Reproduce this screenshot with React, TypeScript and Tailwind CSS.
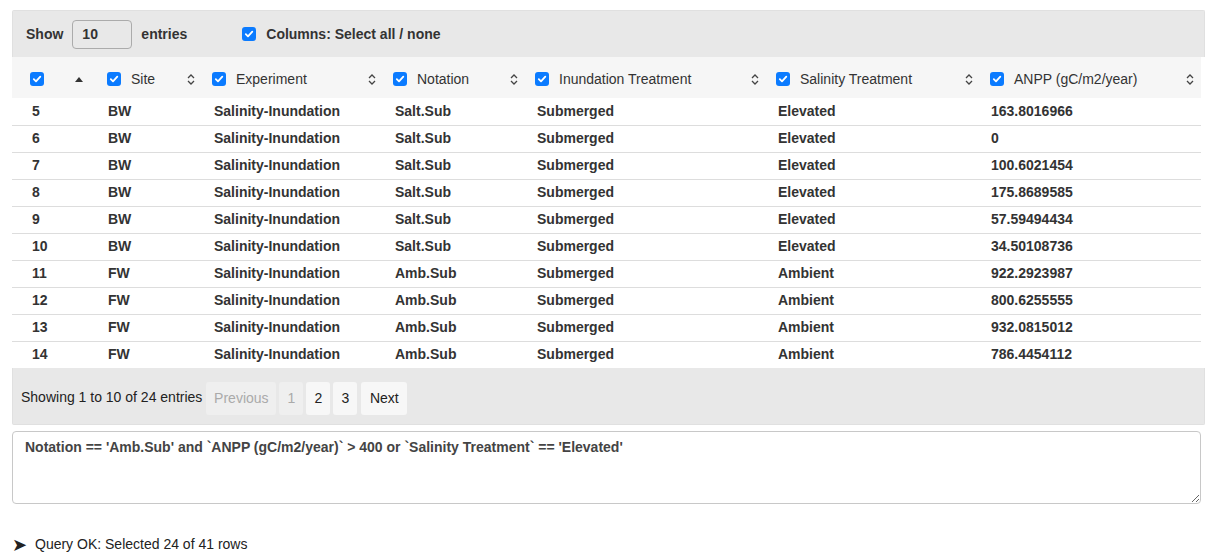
import type { ReactNode } from "react";

type Row = {
  id: number;
  site: string;
  experiment: string;
  notation: string;
  inundation: string;
  salinity: string;
  anpp: string;
};

const rows: Row[] = [
  { id: 5, site: "BW", experiment: "Salinity-Inundation", notation: "Salt.Sub", inundation: "Submerged", salinity: "Elevated", anpp: "163.8016966" },
  { id: 6, site: "BW", experiment: "Salinity-Inundation", notation: "Salt.Sub", inundation: "Submerged", salinity: "Elevated", anpp: "0" },
  { id: 7, site: "BW", experiment: "Salinity-Inundation", notation: "Salt.Sub", inundation: "Submerged", salinity: "Elevated", anpp: "100.6021454" },
  { id: 8, site: "BW", experiment: "Salinity-Inundation", notation: "Salt.Sub", inundation: "Submerged", salinity: "Elevated", anpp: "175.8689585" },
  { id: 9, site: "BW", experiment: "Salinity-Inundation", notation: "Salt.Sub", inundation: "Submerged", salinity: "Elevated", anpp: "57.59494434" },
  { id: 10, site: "BW", experiment: "Salinity-Inundation", notation: "Salt.Sub", inundation: "Submerged", salinity: "Elevated", anpp: "34.50108736" },
  { id: 11, site: "FW", experiment: "Salinity-Inundation", notation: "Amb.Sub", inundation: "Submerged", salinity: "Ambient", anpp: "922.2923987" },
  { id: 12, site: "FW", experiment: "Salinity-Inundation", notation: "Amb.Sub", inundation: "Submerged", salinity: "Ambient", anpp: "800.6255555" },
  { id: 13, site: "FW", experiment: "Salinity-Inundation", notation: "Amb.Sub", inundation: "Submerged", salinity: "Ambient", anpp: "932.0815012" },
  { id: 14, site: "FW", experiment: "Salinity-Inundation", notation: "Amb.Sub", inundation: "Submerged", salinity: "Ambient", anpp: "786.4454112" },
];

const columns = [
  { label: "Site", width: "w-[105px]" },
  { label: "Experiment", width: "w-[181px]" },
  { label: "Notation", width: "w-[142px]" },
  { label: "Inundation Treatment", width: "w-[241px]" },
  { label: "Salinity Treatment", width: "w-[214px]" },
  { label: "ANPP (gC/m2/year)", width: "w-[221px]" },
];

function Check() {
  return (
    <span className="inline-flex h-[14px] w-[14px] shrink-0 items-center justify-center rounded-[3px] bg-[#0b7bff]">
      <svg width="10" height="10" viewBox="0 0 10 10" fill="none">
        <path d="M1.8 5.2 L4 7.4 L8.3 2.6" stroke="white" strokeWidth="1.8" strokeLinecap="round" strokeLinejoin="round" />
      </svg>
    </span>
  );
}

function SortIcon() {
  return (
    <svg width="8" height="11" viewBox="0 0 8 11" fill="none" className="shrink-0">
      <path d="M1 4 L4 1 L7 4" stroke="#444" strokeWidth="1.3" />
      <path d="M1 7 L4 10 L7 7" stroke="#444" strokeWidth="1.3" />
    </svg>
  );
}

function PageButton({ children, disabled, className }: { children: ReactNode; disabled?: boolean; className: string }) {
  return (
    <span
      className={
        "flex h-[33px] items-center justify-center rounded-[3px] " +
        (disabled ? "bg-[#efefef] text-[#aaa] " : "bg-[#f7f7f7] text-[#222] ") +
        className
      }
    >
      {children}
    </span>
  );
}

export default function App() {
  return (
    <div className="min-h-[553px] bg-white px-[12px] pt-[10px] font-['Liberation_Sans',Arial,sans-serif] text-[14px] text-[#333]">
      <div className="rounded-t-[2px] border border-b-0 border-[#e0e0e0]">
        <div className="flex h-[46px] items-center bg-[#e8e8e8] pl-[13px] font-bold">
          <span>Show</span>
          <span className="ml-[9px] flex h-[29px] w-[60px] items-center rounded-[4px] border border-[#ababab] bg-[#e8e8e8] pl-[9px]">10</span>
          <span className="ml-[9px]">entries</span>
          <span className="ml-[55px]">
            <Check />
          </span>
          <span className="ml-[10px]">Columns: Select all / none</span>
        </div>
      </div>

      <table className="w-[1189px] table-fixed border-collapse">
        <thead>
          <tr className="h-[41px] bg-[#f6f6f6]">
            <th className="w-[85px] p-0 font-normal">
              <div className="flex items-center pl-[18px] pt-[3px]">
                <Check />
                <svg width="8" height="5" viewBox="0 0 8 5" className="ml-[31px]">
                  <path d="M0 5 L4 0 L8 5 Z" fill="#333" />
                </svg>
              </div>
            </th>
            {columns.map((col) => (
              <th key={col.label} className={col.width + " p-0 font-normal"}>
                <div className="flex items-center pl-[10px] pr-[7px] pt-[3px]">
                  <Check />
                  <span className="ml-[10px] flex-1 text-left text-[#333]">{col.label}</span>
                  <SortIcon />
                </div>
              </th>
            ))}
          </tr>
        </thead>
        <tbody className="font-bold">
          {rows.map((row) => (
            <tr key={row.id} className="h-[27px] border-b border-[#dddddd] last:border-b-0">
              <td className="p-0 pl-[20px]">{row.id}</td>
              <td className="p-0 pl-[11px]">{row.site}</td>
              <td className="p-0 pl-[12px]">{row.experiment}</td>
              <td className="p-0 pl-[12px]">{row.notation}</td>
              <td className="p-0 pl-[12px]">{row.inundation}</td>
              <td className="p-0 pl-[12px]">{row.salinity}</td>
              <td className="p-0 pl-[11px]">{row.anpp}</td>
            </tr>
          ))}
        </tbody>
      </table>

      <div className="flex h-[57px] items-center rounded-b-[2px] border border-t-0 border-[#e0e0e0] bg-[#e8e8e8] pl-[8px] pt-[2px] text-[#222]">
        <span>Showing 1 to 10 of 24 entries</span>
        <div className="ml-[4px] mt-[2px] flex items-center gap-[3px]">
          <PageButton disabled className="w-[70px]">Previous</PageButton>
          <PageButton disabled className="w-[24px]">1</PageButton>
          <PageButton className="w-[24px]">2</PageButton>
          <PageButton className="w-[24px]">3</PageButton>
          <PageButton className="ml-[1px] w-[46px]">Next</PageButton>
        </div>
      </div>

      <textarea
        readOnly
        spellCheck
        className="mt-[6px] block h-[73px] w-[1189px] resize-y rounded-[4px] border border-[#c8c8c8] px-[12px] py-[5px] font-bold text-[#444] outline-none"
        defaultValue="Notation == 'Amb.Sub' and `ANPP (gC/m2/year)` > 400 or `Salinity Treatment` == 'Elevated'"
      />

      <div className="mt-[30px] flex items-center text-[#222]">
        <span className="w-[23px] text-[18px] leading-none">➤</span>
        <span>Query OK: Selected 24 of 41 rows</span>
      </div>
    </div>
  );
}
